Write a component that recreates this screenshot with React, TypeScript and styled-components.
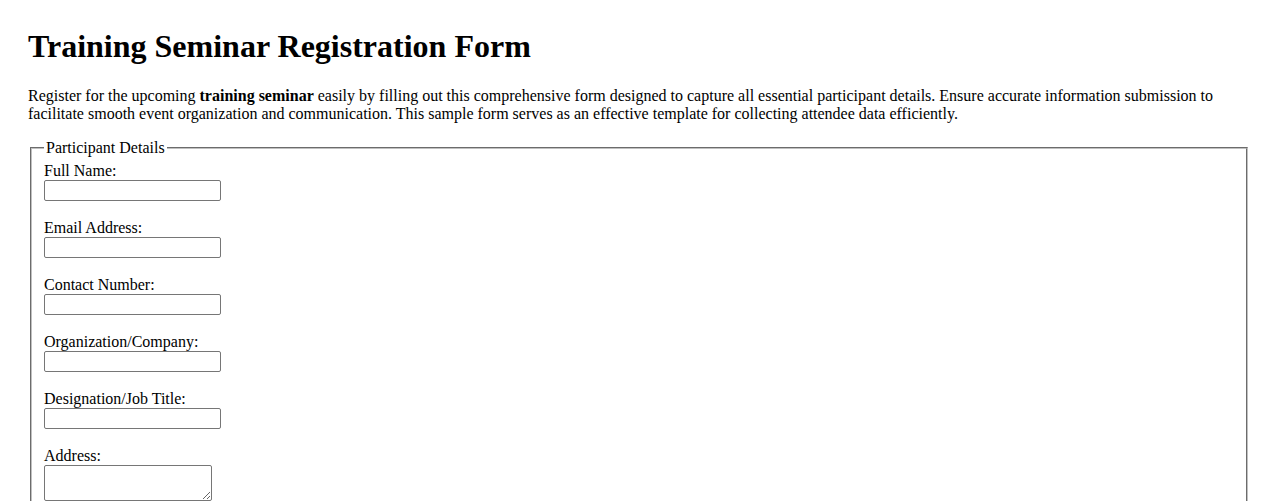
import React from 'react';
import styled, {createGlobalStyle} from 'styled-components';

const GlobalStyle = createGlobalStyle`
    body {
        margin: 0;
        background: #fff;
        color: #000;
        font-family: "Liberation Serif", "Times New Roman", serif;
        font-size: 16px;
    }
`;

const Page = styled.div`
    padding: 28px 28px 0;
`;

const Title = styled.h1`
    margin: 0 0 22px;
    font-size: 32px;
    font-weight: bold;
`;

const Intro = styled.p`
    margin: 0 0 16px;
    line-height: normal;
`;

const Strong = styled.strong`
    font-weight: bold;
`;

const FieldSet = styled.fieldset`
    margin: 0 2px;
    padding: 5px 12px 10px;
    border: 2px groove rgb(192, 192, 192);
    display: flex;
    flex-direction: column;
    min-width: 0;
`;

const Legend = styled.legend`
    padding: 0 2px;
`;

const Field = styled.div`
    display: flex;
    flex-direction: column;
    align-items: flex-start;
    margin-bottom: 18px;
`;

const Label = styled.label`
    line-height: 18px;
`;

const TextInput = styled.input`
    box-sizing: border-box;
    width: 177px;
    height: 21px;
    margin: 0;
    padding: 1px 2px;
    border: 1px solid #767676;
    border-radius: 2px;
    font: 13.33px Arial, "Liberation Sans", sans-serif;
`;

const TextArea = styled.textarea`
    box-sizing: border-box;
    width: 168px;
    height: 36px;
    padding: 2px;
    border: 1px solid #767676;
    border-radius: 2px;
    font: 13.33px "Liberation Mono", monospace;
`;

const fields = [
    {id: 'fullName', label: 'Full Name:', type: 'text'},
    {id: 'email', label: 'Email Address:', type: 'email'},
    {id: 'phone', label: 'Contact Number:', type: 'tel'},
    {id: 'company', label: 'Organization/Company:', type: 'text'},
    {id: 'jobTitle', label: 'Designation/Job Title:', type: 'text'},
];

export default function App() {
    return (
        <>
            <GlobalStyle/>
            <Page>
                <Title>Training Seminar Registration Form</Title>
                <Intro>
                    Register for the upcoming <Strong>training seminar</Strong> easily by filling out this comprehensive
                    form designed to capture all essential participant details. Ensure accurate information submission to
                    facilitate smooth event organization and communication. This sample form serves as an effective
                    template for collecting attendee data efficiently.
                </Intro>
                <form>
                    <FieldSet>
                        <Legend>Participant Details</Legend>
                        {fields.map(f => (
                            <Field key={f.id}>
                                <Label htmlFor={f.id}>{f.label}</Label>
                                <TextInput id={f.id} name={f.id} type={f.type}/>
                            </Field>
                        ))}
                        <Field>
                            <Label htmlFor="address">Address:</Label>
                            <TextArea id="address" name="address"/>
                        </Field>
                    </FieldSet>
                </form>
            </Page>
        </>
    );
}
